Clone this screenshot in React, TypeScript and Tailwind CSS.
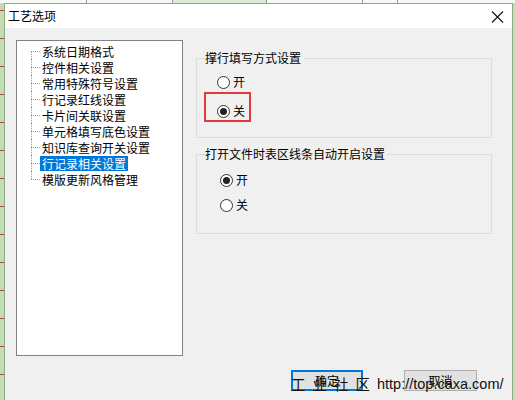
import React from "react";

const cjk = "font-['Noto_Sans_CJK_SC','Liberation_Sans',sans-serif]";

const treeItems = [
  "系统日期格式",
  "控件相关设置",
  "常用特殊符号设置",
  "行记录红线设置",
  "卡片间关联设置",
  "单元格填写底色设置",
  "知识库查询开关设置",
  "行记录相关设置",
  "模版更新风格管理",
];

function Radio({ checked, label }: { checked?: boolean; label: string }) {
  return (
    <div className="flex h-[16px] items-center gap-[3px]">
      <span className="flex h-[13px] w-[13px] items-center justify-center rounded-full border border-[#333] bg-white">
        {checked ? <span className="h-[7px] w-[7px] rounded-full bg-[#222]" /> : null}
      </span>
      <span className="text-[12px] leading-[16px]">{label}</span>
    </div>
  );
}

function TreeRow({ label, index }: { label: string; index: number }) {
  const first = index === 0;
  const last = index === treeItems.length - 1;
  const selected = label === "行记录相关设置" && index === 7;
  return (
    <div className="flex h-[16px] items-center">
      <div className="flex w-[9px] flex-col self-stretch">
        <div className={`h-[8px] ${first ? "" : "border-l border-dotted border-[#a0a0a0]"}`} />
        <div
          className={`h-[8px] border-t border-dotted border-[#a0a0a0] ${last ? "" : "border-l"}`}
        />
      </div>
      <span
        className={`h-[15px] px-[2px] text-[12px] leading-[15px] ${
          selected ? "bg-[#0078d7] text-white" : "text-black"
        }`}
      >
        {label}
      </span>
    </div>
  );
}

export default function App() {
  const ticks = Array.from({ length: 14 });
  return (
    <div className={`relative flex h-[400px] w-[515px] flex-col overflow-hidden bg-[#c3dcb6] ${cjk}`}>
      {/* sheet behind the dialog */}
      <div className="flex h-[3px] bg-[#f6f8f4]">
        <div className="w-[87px] border-r border-[#9a9a9a]" />
        <div className="w-[86px] border-r border-[#9a9a9a]" />
        <div className="w-[94px] border-r border-[#9a9a9a] bg-[#dcebd3]" />
        <div className="w-[96px] border-r border-[#9a9a9a]" />
        <div className="w-[35px] border-r border-[#9a9a9a]" />
        <div className="flex-1" />
      </div>

      <div className="flex flex-1">
        <div className="flex w-[4px] flex-col gap-[27px] pt-[7px]">
          {ticks.map((_, i) => (
            <div key={i} className="h-px w-[4px] bg-[#b8423a]" />
          ))}
        </div>

        {/* dialog */}
        <div className="flex w-[509px] flex-col border-x border-t border-[#8ea983] bg-[#f0f0f0]">
          <div className="flex h-[24px] items-center justify-between bg-white pl-[3px] pr-[8px]">
            <span className="text-[12px] leading-[14px] text-black">工艺选项</span>
            <svg width="13" height="12" viewBox="0 0 13 12" className="mt-[1px]">
              <path d="M1 0.5 L12 11.5 M12 0.5 L1 11.5" stroke="#111" strokeWidth="1.1" fill="none" />
            </svg>
          </div>

          <div className="flex flex-col pl-[11px] pt-[12px]">
            <div className="flex">
              <div className="flex h-[316px] w-[167px] flex-col border border-[#828282] bg-white pl-[14px] pt-[2px]">
                {treeItems.map((item, i) => (
                  <TreeRow key={i} label={item} index={i} />
                ))}
              </div>

              <div className="ml-[13px] flex w-[296px] flex-col pt-[11px]">
                <fieldset className="border border-[#dcdcdc] pb-[15px] pl-[8px]">
                  <legend className="pr-[3px] text-[12px] leading-[14px]">撑行填写方式设置</legend>
                  <div className="ml-[12px] mt-[9px]">
                    <Radio label="开" />
                  </div>
                  <div className="mt-[2px] w-[47px] border-2 border-[#e2393c] pb-[1px] pl-[11px] pt-[9px] ml-[-1px]">
                    <Radio checked label="关" />
                  </div>
                </fieldset>

                <fieldset className="mt-[9px] border border-[#dcdcdc] pb-[20px] pl-[8px]">
                  <legend className="pr-[3px] text-[12px] leading-[14px]">打开文件时表区线条自动开启设置</legend>
                  <div className="ml-[15px] mt-[11px] flex flex-col gap-[9px]">
                    <Radio checked label="开" />
                    <Radio label="关" />
                  </div>
                </fieldset>
              </div>
            </div>

            <div className="mt-[14px] flex justify-end gap-[41px] pr-[35px]">
              <button className="h-[21px] w-[72px] border-2 border-[#0078d7] bg-[#e1e1e1] text-[12px] leading-[15px] text-black">
                确定
              </button>
              <button className="h-[21px] w-[73px] border border-[#adadad] bg-[#e1e1e1] text-[12px] leading-[15px] text-black">
                取消
              </button>
            </div>
          </div>
        </div>
      </div>

      {/* site watermark lying over the dialog */}
      <div className="pointer-events-none absolute left-[291px] top-[375px] flex items-center text-[14.5px] leading-[18px] text-[#111]">
        <span className="tracking-[7px]">工业社区</span>
        <span className="font-['Liberation_Sans',sans-serif]">http://top.caxa.com/</span>
      </div>
    </div>
  );
}
